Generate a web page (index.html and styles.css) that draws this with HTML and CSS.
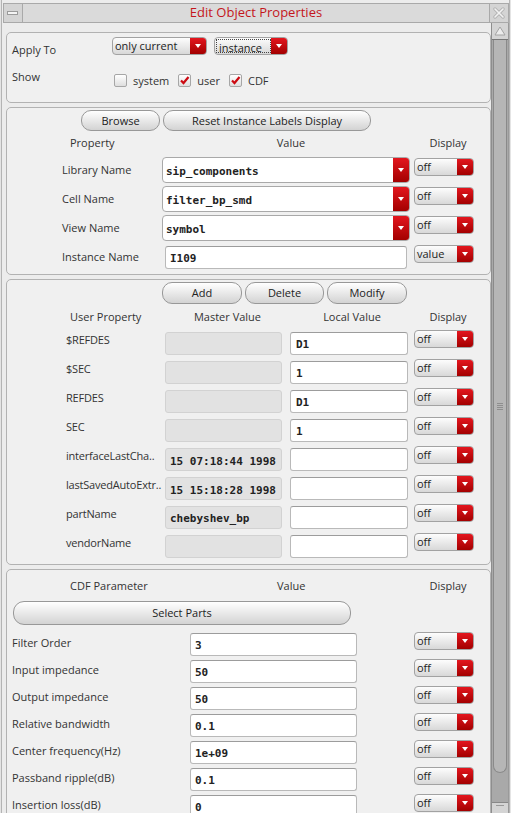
FILE: index.html
```html
<!DOCTYPE html>
<html>
<head>
<meta charset="utf-8">
<title>Edit Object Properties</title>
<link rel="stylesheet" href="styles.css">
</head>
<body>
<div class="window">
  <div class="titlebar">
    <div class="tb-btn">
      <svg width="12" height="6" viewBox="0 0 12 6"><rect x="0.5" y="1.5" width="10" height="3" fill="#f4f4f4" stroke="#9a9a9a"/></svg>
    </div>
    <div class="title">Edit Object Properties</div>
    <div class="tb-btn tb-close">
      <svg width="12" height="12" viewBox="0 0 12 12"><path d="M2 2 L10 10 M10 2 L2 10" stroke="#b4b4b4" stroke-width="3.4" stroke-linecap="round"/><path d="M2 2 L10 10 M10 2 L2 10" stroke="#f2f2f2" stroke-width="1.6" stroke-linecap="round"/></svg>
    </div>
  </div>
  <div class="main">
    <div class="content">
      <section class="panel p1">
        <div class="row-apply">
          <div class="lbl-apply">Apply To</div>
          <div class="drop w95"><span class="txt">only current</span><span class="arr"><i class="tri"></i></span></div>
          <div class="drop w74 ml8"><span class="txt focus">instance</span><span class="arr"><i class="tri"></i></span></div>
        </div>
        <div class="row-show">
          <div class="lbl-show">Show</div>
          <div class="checks">
            <label class="chk"><span class="box"></span><span>system</span></label>
            <label class="chk"><span class="box"><svg width="11" height="11" viewBox="0 0 11 11"><path d="M2 5.5 L4.5 8 L9.5 2" fill="none" stroke="#cc0a12" stroke-width="2.2"/></svg></span><span>user</span></label>
            <label class="chk"><span class="box"><svg width="11" height="11" viewBox="0 0 11 11"><path d="M2 5.5 L4.5 8 L9.5 2" fill="none" stroke="#cc0a12" stroke-width="2.2"/></svg></span><span>CDF</span></label>
          </div>
        </div>
      </section>

      <section class="panel p2">
        <div class="btnrow p2-btns">
          <div class="btn w79">Browse</div>
          <div class="btn w208">Reset Instance Labels Display</div>
        </div>
        <div class="grid2 hdr">
          <div class="h-prop">Property</div>
          <div class="h-val">Value</div>
          <div class="h-disp">Display</div>
        </div>
        <div class="grid2 rows2">
          <div class="lbl">Library Name</div>
          <div class="combo"><span class="mono ctext">sip_components</span><span class="arr"><i class="tri"></i></span></div>
          <div class="drop w60 mt1"><span class="txt">off</span><span class="arr"><i class="tri"></i></span></div>

          <div class="lbl">Cell Name</div>
          <div class="combo"><span class="mono ctext">filter_bp_smd</span><span class="arr"><i class="tri"></i></span></div>
          <div class="drop w60 mt1"><span class="txt">off</span><span class="arr"><i class="tri"></i></span></div>

          <div class="lbl">View Name</div>
          <div class="combo"><span class="mono ctext">symbol</span><span class="arr"><i class="tri"></i></span></div>
          <div class="drop w60 mt1"><span class="txt">off</span><span class="arr"><i class="tri"></i></span></div>

          <div class="lbl">Instance Name</div>
          <div class="field inst mono">I109</div>
          <div class="drop w60 mt1"><span class="txt">value</span><span class="arr"><i class="tri"></i></span></div>
        </div>
      </section>

      <section class="panel p3">
        <div class="btnrow p3-btns">
          <div class="btn w80">Add</div>
          <div class="btn w79">Delete</div>
          <div class="btn w80">Modify</div>
        </div>
        <div class="grid3 hdr3">
          <div class="h-uprop">User Property</div>
          <div class="h-center">Master Value</div>
          <div class="h-center">Local Value</div>
          <div class="h-disp">Display</div>
        </div>
        <div class="grid3 rows3">
          <div class="lbl3">$REFDES</div>
          <div class="master"></div>
          <div class="field local mono">D1</div>
          <div class="drop w60"><span class="txt">off</span><span class="arr"><i class="tri"></i></span></div>

          <div class="lbl3">$SEC</div>
          <div class="master"></div>
          <div class="field local mono">1</div>
          <div class="drop w60"><span class="txt">off</span><span class="arr"><i class="tri"></i></span></div>

          <div class="lbl3">REFDES</div>
          <div class="master"></div>
          <div class="field local mono">D1</div>
          <div class="drop w60"><span class="txt">off</span><span class="arr"><i class="tri"></i></span></div>

          <div class="lbl3">SEC</div>
          <div class="master"></div>
          <div class="field local mono">1</div>
          <div class="drop w60"><span class="txt">off</span><span class="arr"><i class="tri"></i></span></div>

          <div class="lbl3">interfaceLastCha..</div>
          <div class="master mono date">15 07:18:44 1998</div>
          <div class="field local mono"></div>
          <div class="drop w60"><span class="txt">off</span><span class="arr"><i class="tri"></i></span></div>

          <div class="lbl3">lastSavedAutoExtr..</div>
          <div class="master mono date">15 15:18:28 1998</div>
          <div class="field local mono"></div>
          <div class="drop w60"><span class="txt">off</span><span class="arr"><i class="tri"></i></span></div>

          <div class="lbl3">partName</div>
          <div class="master mono">chebyshev_bp</div>
          <div class="field local mono"></div>
          <div class="drop w60"><span class="txt">off</span><span class="arr"><i class="tri"></i></span></div>

          <div class="lbl3">vendorName</div>
          <div class="master"></div>
          <div class="field local mono"></div>
          <div class="drop w60"><span class="txt">off</span><span class="arr"><i class="tri"></i></span></div>
        </div>
      </section>

      <section class="panel p4">
        <div class="grid4 hdr4">
          <div class="h-cdf">CDF Parameter</div>
          <div class="h-val4">Value</div>
          <div class="h-disp">Display</div>
        </div>
        <div class="sel-wrap"><div class="btn select">Select Parts</div></div>
        <div class="grid4 rows4">
          <div class="lbl4">Filter Order</div>
          <div class="field f4 mono">3</div>
          <div class="drop w60"><span class="txt">off</span><span class="arr"><i class="tri"></i></span></div>

          <div class="lbl4">Input impedance</div>
          <div class="field f4 mono">50</div>
          <div class="drop w60"><span class="txt">off</span><span class="arr"><i class="tri"></i></span></div>

          <div class="lbl4">Output impedance</div>
          <div class="field f4 mono">50</div>
          <div class="drop w60"><span class="txt">off</span><span class="arr"><i class="tri"></i></span></div>

          <div class="lbl4">Relative bandwidth</div>
          <div class="field f4 mono">0.1</div>
          <div class="drop w60"><span class="txt">off</span><span class="arr"><i class="tri"></i></span></div>

          <div class="lbl4">Center frequency(Hz)</div>
          <div class="field f4 mono">1e+09</div>
          <div class="drop w60"><span class="txt">off</span><span class="arr"><i class="tri"></i></span></div>

          <div class="lbl4">Passband ripple(dB)</div>
          <div class="field f4 mono">0.1</div>
          <div class="drop w60"><span class="txt">off</span><span class="arr"><i class="tri"></i></span></div>

          <div class="lbl4">Insertion loss(dB)</div>
          <div class="field f4 mono">0</div>
          <div class="drop w60"><span class="txt">off</span><span class="arr"><i class="tri"></i></span></div>
        </div>
      </section>
    </div>

    <div class="scrollbar">
      <div class="sb-up">
        <svg width="12" height="10" viewBox="0 0 12 10"><polygon points="6,1 11,9 1,9" fill="#ececec" stroke="#a4a4a4"/></svg>
      </div>
      <div class="sb-thumb">
        <div class="grip"><i></i><i></i><i></i><i></i></div>
      </div>
      <div class="sb-rest"></div>
      <div class="sb-down"><i></i></div>
    </div>
  </div>
</div>
</body>
</html>
```

FILE: styles.css
```css
html, body {
  margin: 0;
  padding: 0;
}
body {
  width: 511px;
  height: 813px;
  overflow: hidden;
  background: #e4e4e4;
  font-family: "Open Sans", "Liberation Sans", sans-serif;
  font-size: 11px;
  color: #333;
}
.window {
  margin-left: 1px;
  width: 509px;
  height: 813px;
  box-sizing: border-box;
  border-left: 1px solid #b4b4b4;
  border-right: 1px solid #b4b4b4;
  background: #ececec;
  display: flex;
  flex-direction: column;
}
.titlebar {
  margin: 3px 0 0 1px;
  width: 506px;
  height: 20px;
  box-sizing: border-box;
  border: 1px solid #a9a9a9;
  background: #dadada;
  display: flex;
  align-items: stretch;
}
.tb-btn {
  width: 18px;
  border-right: 1px solid #a9a9a9;
  background: #d4d4d4;
  display: flex;
  align-items: center;
  justify-content: center;
}
.tb-close {
  border-right: none;
  border-left: 1px solid #a9a9a9;
}
.title {
  flex: 1;
  text-align: center;
  color: #c4161c;
  font-size: 13px;
  line-height: 17px;
}
.main {
  display: flex;
  flex: 1;
  min-height: 0;
  overflow: hidden;
}
.content {
  margin-left: 4px;
  width: 485px;
  padding-top: 9px;
  display: flex;
  flex-direction: column;
  gap: 4px;
  flex-shrink: 0;
}
.panel {
  border: 1px solid #b2b2b2;
  border-radius: 5px;
  background: #f0f0f0;
  box-sizing: border-box;
  flex-shrink: 0;
}

/* dropdowns */
.drop {
  display: flex;
  height: 18px;
  box-sizing: border-box;
  border: 1px solid #a2a2a2;
  border-radius: 4px;
  background: linear-gradient(#fdfdfd, #d8d8d8);
  overflow: hidden;
  color: #222;
}
.drop .txt {
  flex: 1;
  padding-left: 2px;
  line-height: 15px;
  white-space: nowrap;
}
.arr {
  width: 16px;
  flex-shrink: 0;
  background: linear-gradient(#e3161e, #a30000);
  display: flex;
  align-items: center;
  justify-content: center;
}
.tri {
  width: 0;
  height: 0;
  border-left: 3px solid transparent;
  border-right: 3px solid transparent;
  border-top: 4px solid #fff;
}
.w95 { width: 95px; }
.w74 { width: 74px; }
.w60 { width: 60px; }
.ml8 { margin-left: 7px; }
.mt1 { margin-top: 1px; }
.focus {
  margin: 1px 0 1px 1px;
  border: 1px dotted #444;
  line-height: 12px;
  padding-left: 1px;
}

/* panel 1 */
.p1 {
  height: 71px;
  padding: 4px 0 0 5px;
}
.row-apply {
  display: flex;
  height: 18px;
}
.lbl-apply {
  width: 100px;
  line-height: 14px;
  margin-top: 6px;
}
.row-show {
  display: flex;
  margin-top: 15px;
}
.lbl-show {
  width: 102px;
  line-height: 14px;
}
.checks {
  display: flex;
  gap: 9px;
  margin-top: 4px;
}
.chk {
  display: flex;
  align-items: center;
  gap: 6px;
  height: 13px;
  line-height: 13px;
}
.box {
  width: 13px;
  height: 13px;
  box-sizing: border-box;
  border: 1px solid #a6a6a6;
  border-radius: 2px;
  background: linear-gradient(#ffffff, #dedede);
  display: flex;
  align-items: center;
  justify-content: center;
}

/* buttons */
.btnrow {
  display: flex;
  gap: 3px;
}
.btn {
  box-sizing: border-box;
  border: 1px solid #989898;
  border-radius: 10px;
  background: linear-gradient(#ffffff, #d3d3d3);
  text-align: center;
  color: #222;
}
.w79 { width: 79px; }
.w80 { width: 80px; }
.w208 { width: 208px; }

/* panel 2 */
.p2 {
  height: 168px;
  padding-top: 2px;
}
.p2-btns {
  padding-left: 74px;
}
.p2-btns .btn {
  height: 21px;
  line-height: 19px;
}
.grid2 {
  display: grid;
  grid-template-columns: 96px 248px 60px;
  column-gap: 4px;
  padding-left: 55px;
}
.hdr {
  margin-top: 4px;
  line-height: 15px;
}
.h-prop { padding-left: 8px; }
.h-val { text-align: center; padding-left: 10px; }
.h-disp { text-align: center; padding-left: 8px; }
.rows2 {
  margin-top: 7px;
  grid-auto-rows: 26px;
  row-gap: 3px;
}
.lbl {
  align-self: center;
  line-height: 14px;
  white-space: nowrap;
}
.combo {
  display: flex;
  box-sizing: border-box;
  height: 26px;
  border: 1px solid #a9a9a9;
  border-radius: 4px;
  background: #fff;
  overflow: hidden;
}
.combo .ctext {
  flex: 1;
  padding-left: 3px;
  line-height: 25px;
  padding-top: 1px;
}
.mono {
  font-family: "DejaVu Sans Mono", "Liberation Mono", monospace;
  font-weight: bold;
  font-size: 11px;
  color: #222;
}
.field {
  box-sizing: border-box;
  height: 23px;
  border: 1px solid #b9b9b9;
  border-top-color: #9c9c9c;
  border-radius: 3px;
  background: #fff;
  padding-left: 4px;
  line-height: 23px;
  white-space: nowrap;
  overflow: hidden;
}
.inst {
  margin: 2px 0 0 3px;
  width: 242px;
}

/* panel 3 */
.p3 {
  height: 286px;
  padding-top: 2px;
}
.p3-btns {
  padding-left: 155px;
}
.p3-btns .btn {
  height: 22px;
  line-height: 20px;
}
.grid3 {
  display: grid;
  grid-template-columns: 99px 125px 124px 60px;
  padding-left: 59px;
}
.hdr3 {
  margin-top: 5px;
  line-height: 15px;
}
.h-uprop { padding-left: 4px; }
.h-center { text-align: center; }
.rows3 {
  margin-top: 6px;
  grid-auto-rows: 29px;
}
.lbl3 {
  margin-top: 3px;
  line-height: 14px;
  white-space: nowrap;
  letter-spacing: -0.2px;
}
.master {
  margin-top: 2px;
  width: 117px;
  height: 23px;
  box-sizing: border-box;
  border: 1px solid #d2d2d2;
  border-radius: 3px;
  background: #e2e2e2;
  padding-left: 4px;
  line-height: 24px;
  white-space: nowrap;
  overflow: hidden;
}
.date {
  line-height: 26px;
}
.local {
  margin-top: 2px;
  width: 118px;
  padding-left: 5px;
  line-height: 24px;
}

/* panel 4 */
.p4 {
  height: 260px;
  padding-top: 8px;
}
.grid4 {
  display: grid;
  grid-template-columns: 178px 224px 60px;
  padding-left: 5px;
}
.hdr4 {
  line-height: 15px;
}
.h-cdf { padding-left: 58px; }
.h-val4 { padding-left: 87px; }
.sel-wrap {
  margin-top: 8px;
  padding-left: 6px;
}
.select {
  width: 338px;
  height: 24px;
  line-height: 22px;
  border-radius: 11px;
}
.rows4 {
  margin-top: 7px;
  grid-auto-rows: 27px;
}
.lbl4 {
  margin-top: 4px;
  line-height: 14px;
  white-space: nowrap;
}
.f4 {
  margin-top: 1px;
  width: 167px;
  line-height: 23px;
}

/* scrollbar */
.scrollbar {
  width: 18px;
  flex-shrink: 0;
  box-sizing: border-box;
  border-left: 1px solid #8e8e8e;
  border-right: 1px solid #9a9a9a;
  background: #a9a9a9;
  display: flex;
  flex-direction: column;
}
.sb-up {
  height: 16px;
  background: #d4d4d4;
  display: flex;
  align-items: center;
  justify-content: center;
  border-bottom: 1px solid #777;
}
.sb-thumb {
  height: 733px;
  margin: 0 1px;
  box-sizing: border-box;
  border: 1px solid #8a8a8a;
  border-top: none;
  border-radius: 0 0 7px 7px;
  background: #b6b6b6;
  display: flex;
  align-items: center;
  justify-content: center;
}
.grip {
  display: flex;
  flex-direction: column;
  gap: 1px;
}
.grip i {
  display: block;
  width: 6px;
  height: 1px;
  background: #8e8e8e;
}
.sb-rest {
  flex: 1;
}
.sb-down {
  height: 8px;
  background: #d4d4d4;
  border-top: 1px solid #888;
  display: flex;
  justify-content: center;
  padding-top: 2px;
}
.sb-down i {
  display: block;
  width: 8px;
  height: 1px;
  background: #999;
}
```
